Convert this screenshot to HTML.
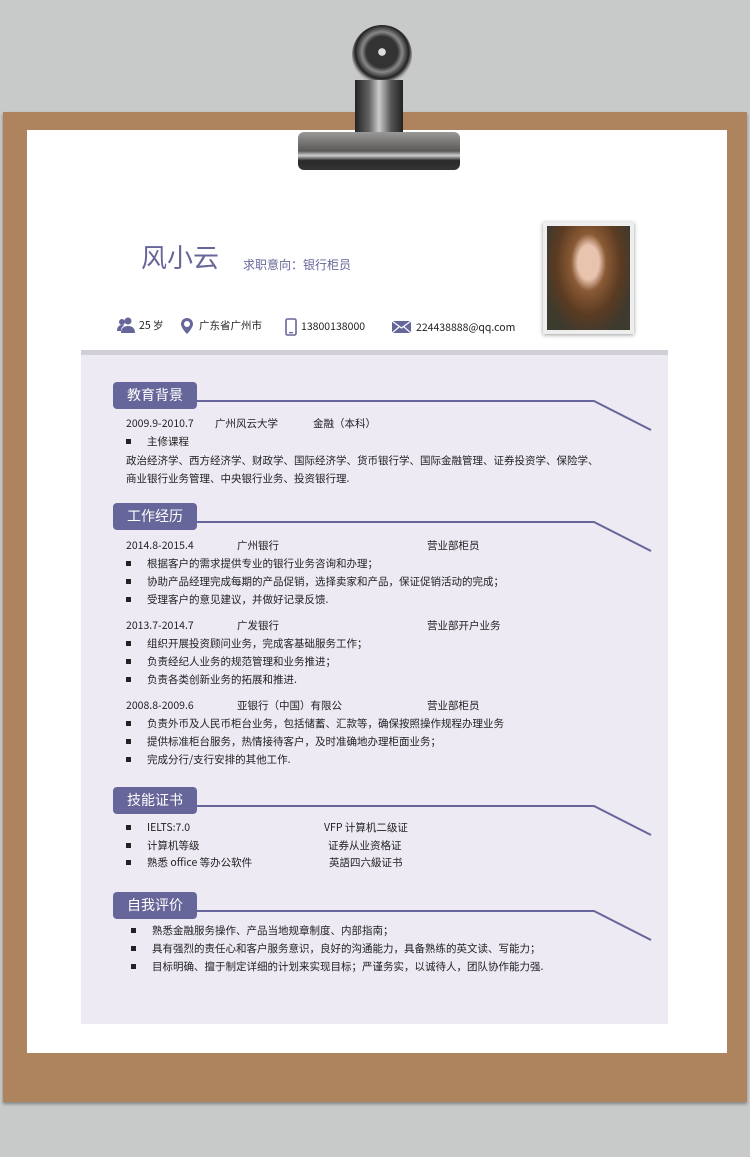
<!DOCTYPE html>
<html><head><meta charset="utf-8"><style>
*{margin:0;padding:0;box-sizing:border-box}
body{width:750px;height:1157px;background:#c8c9c9;position:relative;overflow:hidden;font-family:"Noto Sans CJK SC","Liberation Sans",sans-serif;color:#222}
.a{position:absolute;white-space:nowrap}
.board{left:3px;top:112px;width:744px;height:990px;background:#ad845e;box-shadow:0 2px 3px rgba(0,0,0,.35)}
.paper{left:27px;top:130px;width:700px;height:923px;background:#fff}
.panel{left:81px;top:350px;width:587px;height:674px;background:#edeaf3;border-top:5px solid #d0cfd6}
.tab{left:113px;width:84px;height:27px;background:#66669a;color:#fff;font-size:14px;line-height:27px;text-align:center;border-radius:4px}
.t{font-size:10.5px;line-height:14px;color:#222}
.b{font-size:10.5px;line-height:14px}
.b:before{content:"";display:inline-block;width:5px;height:5px;background:#222;margin:0 16px 2px 0;vertical-align:middle}
</style></head><body>
<div class="a board"></div>
<div class="a paper"></div>
<div class="a" style="left:352px;top:25px;width:60px;height:60px;border-radius:50%;background:radial-gradient(circle at 50% 45%,#ddd 0 8%,#333 9% 35%,#888 45%,#222 60%,#bbb 70%,#333 100%)"></div>
<div class="a" style="left:355px;top:80px;width:48px;height:58px;background:linear-gradient(90deg,#222,#666 30%,#ccc 50%,#555 75%,#222)"></div>
<div class="a" style="left:298px;top:132px;width:162px;height:38px;border-radius:6px;background:linear-gradient(#9a9997,#5a5957 50%,#d0d0d0 62%,#2a2a2a 75%,#333)"></div>
<div class="a" style="left:141px;top:238px;font-size:26px;color:#66669a">风小云</div>
<div class="a" style="left:243px;top:256px;font-size:12px;color:#66669a">求职意向：银行柜员</div>
<div class="a" style="left:543px;top:222px;width:91px;height:112px;background:#eee;box-shadow:0 1px 4px rgba(0,0,0,.4);padding:4px">
<div style="width:100%;height:100%;background:radial-gradient(ellipse at 50% 35%,#e8c3ad 0 18%,#8a5a35 30%,#5b3b22 55%,#3d3a2e 80%)"></div></div>
<svg class="a" style="left:117px;top:317px" width="18" height="16" viewBox="0 0 18 16"><circle cx="11" cy="4" r="3.5" fill="#66669a"/><path d="M4 16c0-5 3-7 7-7s7 2 7 7z" fill="#66669a"/><circle cx="5" cy="5" r="3" fill="#66669a"/><path d="M0 14c0-4 2-6 5-6 1 0 2 .3 2 .6-2 1-3 3-3 5.4z" fill="#66669a"/></svg>
<div class="a t" style="left:139px;top:319px">25 岁</div>
<svg class="a" style="left:179px;top:317px" width="16" height="18" viewBox="0 0 16 18"><path d="M8 1a6 6 0 0 0-6 6c0 4 6 10 6 10s6-6 6-10a6 6 0 0 0-6-6zm0 3a3 3 0 1 1 0 6 3 3 0 0 1 0-6z" fill="#66669a"/></svg>
<div class="a t" style="left:199px;top:319px">广东省广州市</div>
<svg class="a" style="left:285px;top:318px" width="12" height="18" viewBox="0 0 12 18"><rect x="1" y="1" width="10" height="16" rx="1.5" fill="none" stroke="#66669a" stroke-width="1.6"/><rect x="4" y="14" width="4" height="1.3" fill="#66669a"/></svg>
<div class="a t" style="left:301px;top:320px">13800138000</div>
<svg class="a" style="left:392px;top:321px" width="19" height="12" viewBox="0 0 19 12"><rect width="19" height="12" fill="#66669a"/><path d="M0 0l9.5 7L19 0M0 12l7-6M19 12l-7-6" stroke="#fff" stroke-width="1.2" fill="none"/></svg>
<div class="a t" style="left:416px;top:321px">224438888@qq.com</div>
<div class="a panel"></div>
<svg class="a" style="left:0;top:0" width="750" height="1157">
<g fill="none" stroke="#66669a" stroke-width="2">
<path d="M196 401H594L651 430"/><path d="M196 522H594L651 551"/><path d="M196 806H594L651 835"/><path d="M196 911H594L651 940"/>
</g></svg>
<div class="a tab" style="top:382px">教育背景</div>
<div class="a tab" style="top:503px">工作经历</div>
<div class="a tab" style="top:787px">技能证书</div>
<div class="a tab" style="top:892px">自我评价</div>

<div class="a t" style="left:126px;top:417px">2009.9-2010.7</div><div class="a t" style="left:215px;top:417px">广州风云大学</div><div class="a t" style="left:313px;top:417px">金融（本科）</div>
<div class="a b" style="left:126px;top:435px">主修课程</div>
<div class="a t" style="left:126px;top:454px">政治经济学、西方经济学、财政学、国际经济学、货币银行学、国际金融管理、证券投资学、保险学、</div>
<div class="a t" style="left:126px;top:472px">商业银行业务管理、中央银行业务、投资银行理.</div>

<div class="a t" style="left:126px;top:539px">2014.8-2015.4</div><div class="a t" style="left:237px;top:539px">广州银行</div><div class="a t" style="left:427px;top:539px">营业部柜员</div>
<div class="a b" style="left:126px;top:557px">根据客户的需求提供专业的银行业务咨询和办理；</div>
<div class="a b" style="left:126px;top:575px">协助产品经理完成每期的产品促销，选择卖家和产品，保证促销活动的完成；</div>
<div class="a b" style="left:126px;top:593px">受理客户的意见建议，并做好记录反馈.</div>

<div class="a t" style="left:126px;top:619px">2013.7-2014.7</div><div class="a t" style="left:237px;top:619px">广发银行</div><div class="a t" style="left:427px;top:619px">营业部开户业务</div>
<div class="a b" style="left:126px;top:637px">组织开展投资顾问业务，完成客基础服务工作；</div>
<div class="a b" style="left:126px;top:655px">负责经纪人业务的规范管理和业务推进；</div>
<div class="a b" style="left:126px;top:673px">负责各类创新业务的拓展和推进.</div>

<div class="a t" style="left:126px;top:699px">2008.8-2009.6</div><div class="a t" style="left:237px;top:699px">亚银行（中国）有限公</div><div class="a t" style="left:427px;top:699px">营业部柜员</div>
<div class="a b" style="left:126px;top:717px">负责外币及人民币柜台业务，包括储蓄、汇款等，确保按照操作规程办理业务</div>
<div class="a b" style="left:126px;top:735px">提供标准柜台服务，热情接待客户，及时准确地办理柜面业务；</div>
<div class="a b" style="left:126px;top:753px">完成分行/支行安排的其他工作.</div>

<div class="a b" style="left:126px;top:821px">IELTS:7.0</div><div class="a t" style="left:324px;top:821px">VFP 计算机二级证</div>
<div class="a b" style="left:126px;top:839px">计算机等级</div><div class="a t" style="left:328px;top:839px">证券从业资格证</div>
<div class="a b" style="left:126px;top:856px">熟悉 office 等办公软件</div><div class="a t" style="left:329px;top:856px">英語四六級证书</div>

<div class="a b" style="left:131px;top:924px">熟悉金融服务操作、产品当地规章制度、内部指南；</div>
<div class="a b" style="left:131px;top:942px">具有强烈的责任心和客户服务意识，良好的沟通能力，具备熟练的英文读、写能力；</div>
<div class="a b" style="left:131px;top:960px">目标明确、擅于制定详细的计划来实现目标；严谨务实，以诚待人，团队协作能力强.</div>
</body></html>
